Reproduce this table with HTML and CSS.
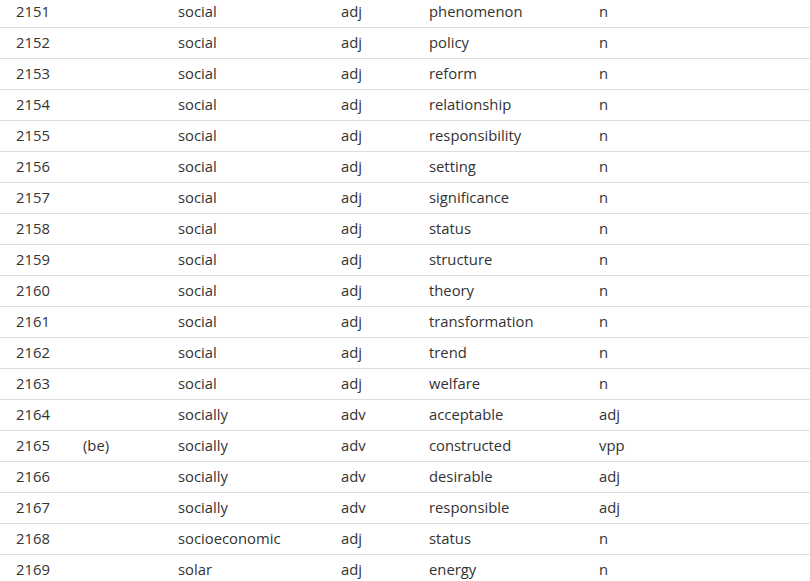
FILE: index.html
```html
<!DOCTYPE html>
<html>
<head>
<meta charset="utf-8">
<link rel="stylesheet" href="styles.css">
</head>
<body>
<div class="wrap">
<table class="colloc">
<colgroup>
<col class="c1"><col class="c2"><col class="c3"><col class="c4"><col class="c5"><col class="c6">
</colgroup>
<tbody>
<tr class="first"><td>2151</td><td></td><td>social</td><td>adj</td><td>phenomenon</td><td>n</td></tr>
<tr><td>2152</td><td></td><td>social</td><td>adj</td><td>policy</td><td>n</td></tr>
<tr><td>2153</td><td></td><td>social</td><td>adj</td><td>reform</td><td>n</td></tr>
<tr><td>2154</td><td></td><td>social</td><td>adj</td><td>relationship</td><td>n</td></tr>
<tr><td>2155</td><td></td><td>social</td><td>adj</td><td>responsibility</td><td>n</td></tr>
<tr><td>2156</td><td></td><td>social</td><td>adj</td><td>setting</td><td>n</td></tr>
<tr><td>2157</td><td></td><td>social</td><td>adj</td><td>significance</td><td>n</td></tr>
<tr><td>2158</td><td></td><td>social</td><td>adj</td><td>status</td><td>n</td></tr>
<tr><td>2159</td><td></td><td>social</td><td>adj</td><td>structure</td><td>n</td></tr>
<tr><td>2160</td><td></td><td>social</td><td>adj</td><td>theory</td><td>n</td></tr>
<tr><td>2161</td><td></td><td>social</td><td>adj</td><td>transformation</td><td>n</td></tr>
<tr><td>2162</td><td></td><td>social</td><td>adj</td><td>trend</td><td>n</td></tr>
<tr><td>2163</td><td></td><td>social</td><td>adj</td><td>welfare</td><td>n</td></tr>
<tr><td>2164</td><td></td><td>socially</td><td>adv</td><td>acceptable</td><td>adj</td></tr>
<tr><td>2165</td><td>(be)</td><td>socially</td><td>adv</td><td>constructed</td><td>vpp</td></tr>
<tr><td>2166</td><td></td><td>socially</td><td>adv</td><td>desirable</td><td>adj</td></tr>
<tr><td>2167</td><td></td><td>socially</td><td>adv</td><td>responsible</td><td>adj</td></tr>
<tr><td>2168</td><td></td><td>socioeconomic</td><td>adj</td><td>status</td><td>n</td></tr>
<tr><td>2169</td><td></td><td>solar</td><td>adj</td><td>energy</td><td>n</td></tr>
</tbody>
</table>
</div>
</body>
</html>
```
FILE: styles.css
```css
html, body {
  margin: 0;
  padding: 0;
  background: #fff;
  overflow: hidden;
}
.wrap {
  margin-top: -4px;
}
.colloc {
  width: 810px;
  border-collapse: collapse;
  table-layout: fixed;
  font-family: "Open Sans", "Noto Sans", sans-serif;
  font-size: 14.8px;
  color: #333;
}
.c1 { width: 67px; }
.c2 { width: 95px; }
.c3 { width: 163px; }
.c4 { width: 88px; }
.c5 { width: 170px; }
.c6 { width: 227px; }
.colloc td {
  height: 20px;
  padding: 4px 0 6px 16px;
  border-top: 1px solid #ddd;
  vertical-align: top;
  white-space: nowrap;
  line-height: 20px;
}
.colloc tr.first td {
  border-top-color: transparent;
}
```
